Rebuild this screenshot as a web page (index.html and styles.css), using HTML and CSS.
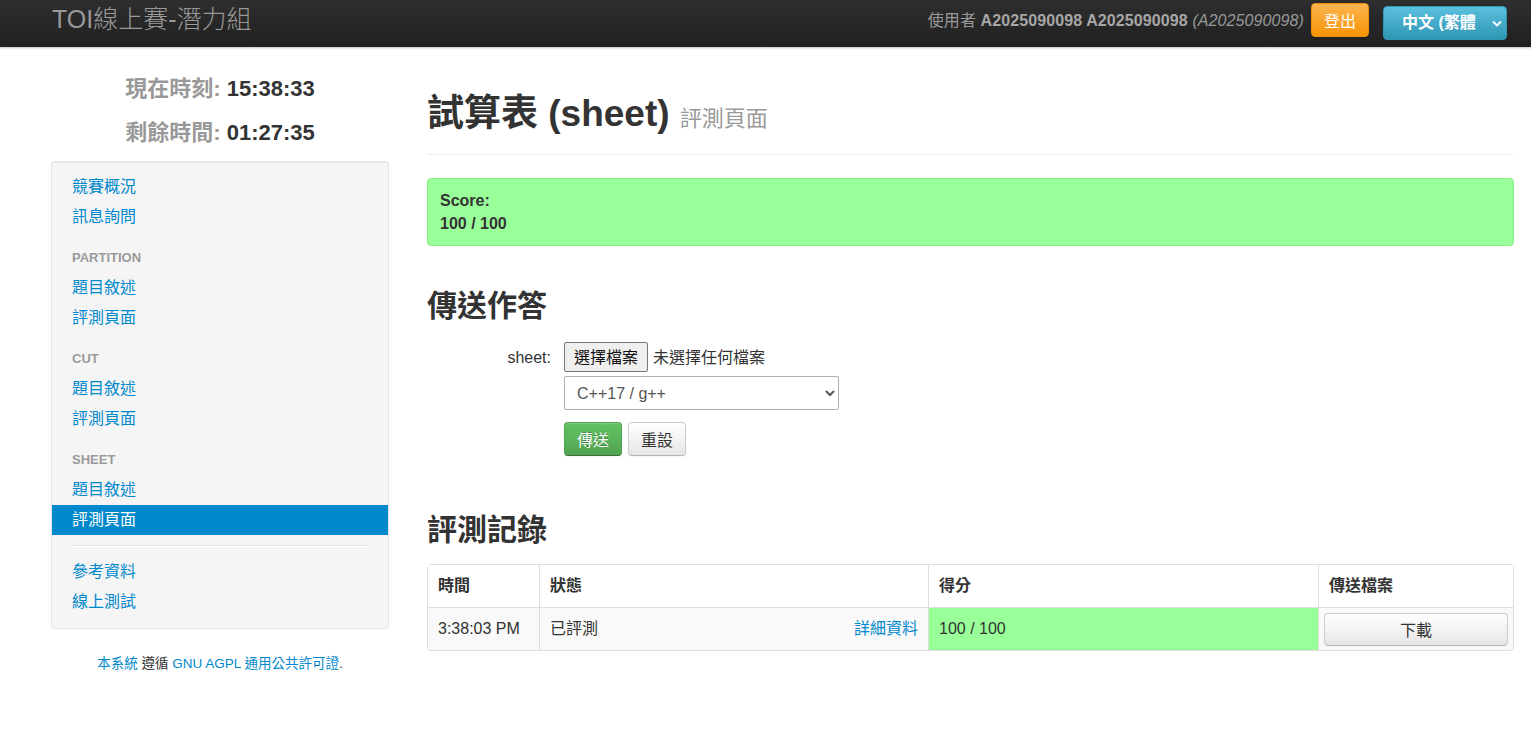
FILE: index.html
```html
<!DOCTYPE html>
<html lang="zh-Hant">
<head>
<meta charset="utf-8">
<title>試算表 (sheet) 評測頁面</title>
<link rel="stylesheet" href="styles.css">
</head>
<body>
<div class="navbar">
  <div class="brand">TOI線上賽-潛力組</div>
  <div class="nav-right">
    <div class="user">使用者 <b>A2025090098 A2025090098</b> <i>(A2025090098)</i></div>
    <button class="btn-logout">登出</button>
    <div class="lang">
      <span class="lang-text">中文 (繁體</span>
      <svg class="lang-arrow" width="10" height="7" viewBox="0 0 10 7"><path d="M1 1.5l4 4 4-4" fill="none" stroke="#fff" stroke-width="1.8"/></svg>
    </div>
  </div>
</div>

<div class="page">
  <aside class="sidebar">
    <div class="clock"><span class="lbl">現在時刻:</span> 15:38:33</div>
    <div class="clock"><span class="lbl">剩餘時間:</span> 01:27:35</div>
    <div class="well">
      <ul class="nav-list">
        <li><a href="#">競賽概況</a></li>
        <li><a href="#">訊息詢問</a></li>
        <li class="nav-header">PARTITION</li>
        <li><a href="#">題目敘述</a></li>
        <li><a href="#">評測頁面</a></li>
        <li class="nav-header">CUT</li>
        <li><a href="#">題目敘述</a></li>
        <li><a href="#">評測頁面</a></li>
        <li class="nav-header">SHEET</li>
        <li><a href="#">題目敘述</a></li>
        <li class="active"><a href="#">評測頁面</a></li>
        <li class="divider"></li>
        <li><a href="#">參考資料</a></li>
        <li><a href="#">線上測試</a></li>
      </ul>
    </div>
    <p class="footer"><a href="#">本系統</a> 遵循 <a href="#">GNU AGPL 通用公共許可證</a>.</p>
  </aside>

  <main class="main">
    <div class="page-header">
      <h1>試算表 (sheet) <small>評測頁面</small></h1>
    </div>
    <div class="alert-score">
      <div>Score:</div>
      <div>100 / 100</div>
    </div>

    <h2 class="section-title">傳送作答</h2>
    <form class="submit-form">
      <div class="form-row">
        <label class="control-label">sheet:</label>
        <div class="controls file-controls">
          <span class="file-btn">選擇檔案</span>
          <span class="file-none">未選擇任何檔案</span>
        </div>
      </div>
      <div class="form-row row-select">
        <span class="control-label"></span>
        <div class="controls">
          <select class="lang-select">
            <option>C++17 / g++</option>
          </select>
        </div>
      </div>
      <div class="form-row row-buttons">
        <span class="control-label"></span>
        <div class="controls buttons">
          <button type="button" class="btn btn-success">傳送</button>
          <button type="button" class="btn btn-default">重設</button>
        </div>
      </div>
    </form>

    <h2 class="section-title records-title">評測記錄</h2>
    <table class="records">
      <thead>
        <tr>
          <th class="c-time">時間</th>
          <th class="c-status">狀態</th>
          <th class="c-score">得分</th>
          <th class="c-file">傳送檔案</th>
        </tr>
      </thead>
      <tbody>
        <tr>
          <td class="c-time">3:38:03 PM</td>
          <td class="c-status">已評測<a href="#" class="details">詳細資料</a></td>
          <td class="c-score score-ok">100 / 100</td>
          <td class="c-file file-cell"><button type="button" class="btn-download">下載</button></td>
        </tr>
      </tbody>
    </table>
  </main>
</div>
</body>
</html>
```

FILE: styles.css
```css
* { box-sizing: border-box; }

body {
  margin: 0;
  font-family: "Liberation Sans", Arial, "Noto Sans CJK TC", sans-serif;
  font-size: 16px;
  line-height: 22px;
  color: #333;
  background: #fff;
}

a { color: #0088cc; text-decoration: none; }

/* navbar */
.navbar {
  height: 47px;
  background: linear-gradient(#2e2e2e, #202020);
  box-shadow: 0 1px 2px rgba(0, 0, 0, 0.25);
  display: flex;
  justify-content: space-between;
  padding: 0 24px 0 52px;
  position: relative;
}
.brand {
  font-size: 25px;
  line-height: 30px;
  height: 34px;
  padding-top: 4px;
  color: #999;
  font-weight: 300;
}
.nav-right { display: flex; align-items: flex-start; }
.user {
  font-size: 16px;
  line-height: 20px;
  height: 20px;
  margin-top: 11px;
  color: #999;
  letter-spacing: 0.1px;
}
.user b { font-weight: bold; color: #a6a6a6; }
.user i { font-style: italic; }
.btn-logout {
  margin: 3px 0 0 7px;
  width: 58px;
  height: 34px;
  border: 1px solid #f0900a;
  border-radius: 4px;
  background: linear-gradient(#fbb450, #f89406);
  color: #fff;
  font-family: inherit;
  font-size: 16px;
  padding: 0;
}
.lang {
  margin: 6px 0 0 14px;
  width: 124px;
  height: 34px;
  border: 1px solid #2f96b4;
  border-radius: 4px;
  background: linear-gradient(#5bc0de, #2f96b4);
  color: #fff;
  display: flex;
  align-items: center;
  padding-left: 18px;
}
.lang-text {
  width: 74px;
  white-space: nowrap;
  font-size: 16px;
  font-weight: bold;
}
.lang-arrow { margin-left: 16px; }

/* page */
.page {
  display: flex;
  gap: 38px;
  padding: 0 17px 0 51px;
}
.sidebar { width: 338px; flex: none; padding-top: 20px; }
.clock {
  text-align: center;
  font-size: 22px;
  line-height: 44px;
  height: 44px;
  font-weight: bold;
  color: #333;
}
.clock .lbl { color: #999; }

.well {
  margin-top: 6px;
  background: #f5f5f5;
  border: 1px solid #e3e3e3;
  border-radius: 4px;
  box-shadow: inset 0 1px 1px rgba(0, 0, 0, 0.05);
  padding: 10px 0 11px;
}
.nav-list { list-style: none; margin: 0; padding: 0; }
.nav-list a {
  display: block;
  padding: 5px 20px;
  line-height: 20px;
  font-size: 16px;
  color: #0088cc;
}
.nav-list .active a { background: #0088cc; color: #fff; }
.nav-header {
  padding: 16px 20px 5px;
  line-height: 20px;
  font-size: 13px;
  font-weight: bold;
  color: #999;
  text-transform: uppercase;
  text-shadow: 0 1px 0 rgba(255, 255, 255, 0.5);
}
.divider {
  margin: 10px 20px;
  height: 1px;
  background: #e5e5e5;
  border-bottom: 1px solid #fff;
  box-sizing: content-box;
}
.footer {
  margin: 25px 0 0;
  text-align: center;
  font-size: 13.5px;
  line-height: 20px;
}

/* main */
.main { flex: 1; min-width: 0; }
.page-header {
  margin-top: 47px;
  padding-bottom: 20px;
  border-bottom: 1px solid #eee;
}
.page-header h1 {
  margin: 0;
  height: 40px;
  font-size: 37px;
  line-height: 40px;
  font-weight: bold;
}
.page-header small {
  font-size: 22px;
  line-height: 22px;
  font-weight: normal;
  color: #999;
}
.alert-score {
  margin-top: 23px;
  background: #99ff99;
  border: 1px solid #88ee88;
  border-radius: 4px;
  padding: 10px 12px;
  line-height: 23px;
  font-weight: bold;
  font-size: 16px;
}
.alert-score div { height: 23px; }
.section-title {
  margin: 40px 0 0;
  height: 40px;
  font-size: 30px;
  line-height: 40px;
  font-weight: bold;
}
.submit-form { margin-top: 16px; }
.form-row { display: flex; align-items: center; }
.control-label {
  width: 124px;
  text-align: right;
  margin-right: 13px;
  font-size: 16px;
  line-height: 28px;
  height: 30px;
  padding-top: 2px;
}
.controls { display: flex; align-items: center; }
.file-btn {
  height: 30px;
  line-height: 30px;
  padding: 0 9px;
  border: 1px solid #767676;
  border-radius: 2px;
  background: #efefef;
  color: #111;
  font-size: 16px;
}
.file-none {
  margin-left: 5px;
  font-size: 16px;
  color: #333;
  height: 30px;
  line-height: 28px;
  padding-top: 2px;
}
.row-select { margin-top: 4px; }
.row-select .control-label, .row-buttons .control-label { height: auto; padding: 0; }
.lang-select {
  width: 275px;
  height: 34px;
  border: 1px solid #b0b0b0;
  border-radius: 2px;
  background: #fff;
  color: #555;
  font-family: inherit;
  font-size: 16px;
  padding: 0 8px;
}
.row-buttons { margin-top: 12px; }
.buttons { gap: 6px; }
.btn {
  height: 34px;
  padding: 0 12px;
  border: 1px solid;
  border-radius: 4px;
  font-family: inherit;
  font-size: 16px;
  box-shadow: inset 0 1px 0 rgba(255, 255, 255, 0.2), 0 1px 2px rgba(0, 0, 0, 0.05);
}
.btn-success {
  color: #fff;
  background: linear-gradient(#62c462, #51a351);
  border-color: #51a351 #51a351 #387038;
  text-shadow: 0 -1px 0 rgba(0, 0, 0, 0.25);
}
.btn-default {
  color: #333;
  background: linear-gradient(#fff, #e6e6e6);
  border-color: #ccc #ccc #b3b3b3;
}
.records-title { margin-top: 54px; }

.records {
  margin-top: 14px;
  width: 100%;
  table-layout: fixed;
  border-collapse: separate;
  border-spacing: 0;
  border: 1px solid #ddd;
  border-radius: 4px;
}
.records th, .records td {
  padding: 10px;
  height: 42px;
  line-height: 22px;
  text-align: left;
  vertical-align: middle;
  border-left: 1px solid #ddd;
  font-size: 16px;
}
.records th:first-child, .records td:first-child { border-left: 0; }
.records td { border-top: 1px solid #ddd; background: #f9f9f9; height: 43px; }
.records th { font-weight: bold; background: #fff; }
.records th.c-time { width: 111px; }
.records th.c-status { width: 389px; }
.records th.c-score { width: 390px; }
.records td.score-ok { background: #99ff99; }
.records tr:last-child td:first-child { border-bottom-left-radius: 4px; }
.records tr:last-child td:last-child { border-bottom-right-radius: 4px; }
.details { float: right; }
.records td.file-cell { padding: 4px 5px; }
.btn-download {
  display: block;
  width: 100%;
  height: 33px;
  border: 1px solid #ccc;
  border-bottom-color: #b3b3b3;
  border-radius: 4px;
  background: linear-gradient(#fff, #e6e6e6);
  color: #333;
  font-family: inherit;
  font-size: 16px;
}
```
